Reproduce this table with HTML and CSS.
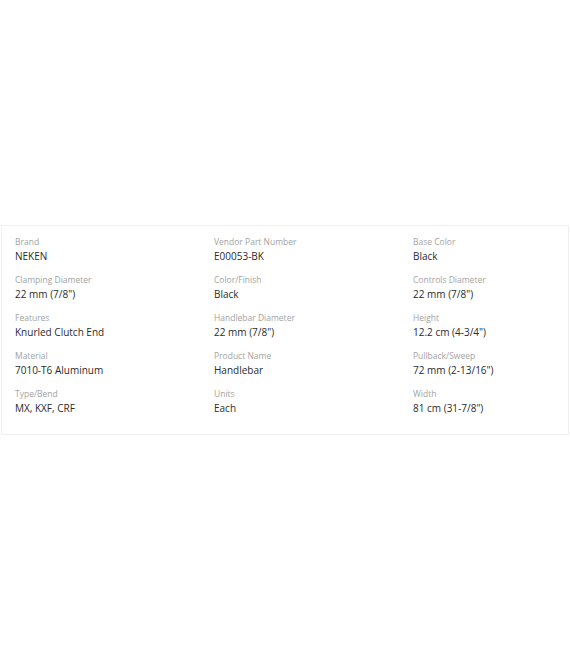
FILE: index.html
```
<!DOCTYPE html>
<html>
<head>
<meta charset="utf-8">
<link rel="stylesheet" href="styles.css">
</head>
<body>
<div class="page">
  <section class="specs">
    <div class="col">
      <div class="item"><div class="label">Brand</div><div class="value">NEKEN</div></div>
      <div class="item"><div class="label">Clamping Diameter</div><div class="value">22 mm (7/8")</div></div>
      <div class="item"><div class="label">Features</div><div class="value">Knurled Clutch End</div></div>
      <div class="item"><div class="label">Material</div><div class="value">7010-T6 Aluminum</div></div>
      <div class="item"><div class="label">Type/Bend</div><div class="value">MX, KXF, CRF</div></div>
    </div>
    <div class="col">
      <div class="item"><div class="label">Vendor Part Number</div><div class="value">E00053-BK</div></div>
      <div class="item"><div class="label">Color/Finish</div><div class="value">Black</div></div>
      <div class="item"><div class="label">Handlebar Diameter</div><div class="value">22 mm (7/8")</div></div>
      <div class="item"><div class="label">Product Name</div><div class="value">Handlebar</div></div>
      <div class="item"><div class="label">Units</div><div class="value">Each</div></div>
    </div>
    <div class="col">
      <div class="item"><div class="label">Base Color</div><div class="value">Black</div></div>
      <div class="item"><div class="label">Controls Diameter</div><div class="value">22 mm (7/8")</div></div>
      <div class="item"><div class="label">Height</div><div class="value">12.2 cm (4-3/4")</div></div>
      <div class="item"><div class="label">Pullback/Sweep</div><div class="value">72 mm (2-13/16")</div></div>
      <div class="item"><div class="label">Width</div><div class="value">81 cm (31-7/8")</div></div>
    </div>
  </section>
</div>
</body>
</html>
```
FILE: styles.css
```
html, body {
  margin: 0;
  padding: 0;
  background: #ffffff;
}
body {
  font-family: "Open Sans", "Noto Sans", sans-serif;
}
.page {
  padding-top: 225px;
  padding-left: 1px;
  width: 568px;
}
.specs {
  display: grid;
  grid-template-columns: 199px 199px 1fr;
  border: 1px solid #efefef;
  padding: 9px 0 9px 13px;
}
.item {
  margin-bottom: 9px;
}
.label {
  font-size: 8.5px;
  line-height: 13px;
  color: #a3a3a3;
}
.value {
  font-size: 10px;
  line-height: 16px;
  color: #2b2b2b;
}
```
